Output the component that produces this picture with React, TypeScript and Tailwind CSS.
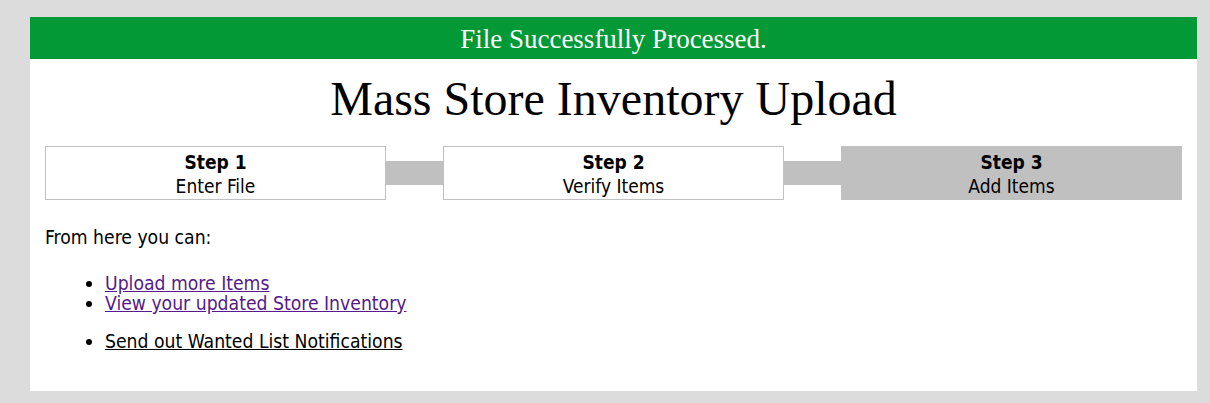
const steps = [
  { n: 1, label: "Enter File", done: false },
  { n: 2, label: "Verify Items", done: false },
  { n: 3, label: "Add Items", done: true },
];

const StepBox = ({ n, label, done }: { n: number; label: string; done: boolean }) => (
  <div
    className={
      "w-[341px] h-[54px] shrink-0 border border-[#c0c0c0] pt-[3px] text-center text-[19px] leading-[24px] text-black " +
      (done ? "bg-[#c0c0c0]" : "bg-white")
    }
  >
    <div className="font-bold">Step {n}</div>
    <div>{label}</div>
  </div>
);

export default function App() {
  return (
    <div className="min-h-[403px] bg-[#dcdcdc] pt-[17px] pb-[12px]">
      <div className="ml-[30px] w-[1167px] h-[374px] bg-white">
        <div className="h-[42px] bg-[#029936] text-center text-white text-[27px] leading-[44px] font-['Liberation_Serif',serif]">
          File Successfully Processed.
        </div>
        <div className="px-[15px] font-['DejaVu_Sans_Condensed','Liberation_Sans',sans-serif] text-[19.2px]">
          <h1 className="mt-[12px] text-center text-[48px] leading-[55px] font-normal font-['Liberation_Serif',serif]">
            Mass Store Inventory Upload
          </h1>
          <div className="mt-[20px] flex items-center">
            {steps.map((s, i) => (
              <div key={s.n} className="flex items-center">
                {i > 0 && <div className="w-[57px] h-[24px] bg-[#c0c0c0]" />}
                <StepBox {...s} />
              </div>
            ))}
          </div>
          <p className="mt-[26px] leading-[23px]">From here you can:</p>
          <ul className="mt-[25px] pl-[60px] list-disc leading-[20px]">
            <li>
              <a href="#" className="underline text-[#551a8b]">Upload more Items</a>
            </li>
            <li>
              <a href="#" className="underline text-[#551a8b]">View your updated Store Inventory</a>
            </li>
          </ul>
          <ul className="mt-[18px] pl-[60px] list-disc leading-[20px]">
            <li>
              <a href="#" className="underline text-black">Send out Wanted List Notifications</a>
            </li>
          </ul>
        </div>
      </div>
    </div>
  );
}
